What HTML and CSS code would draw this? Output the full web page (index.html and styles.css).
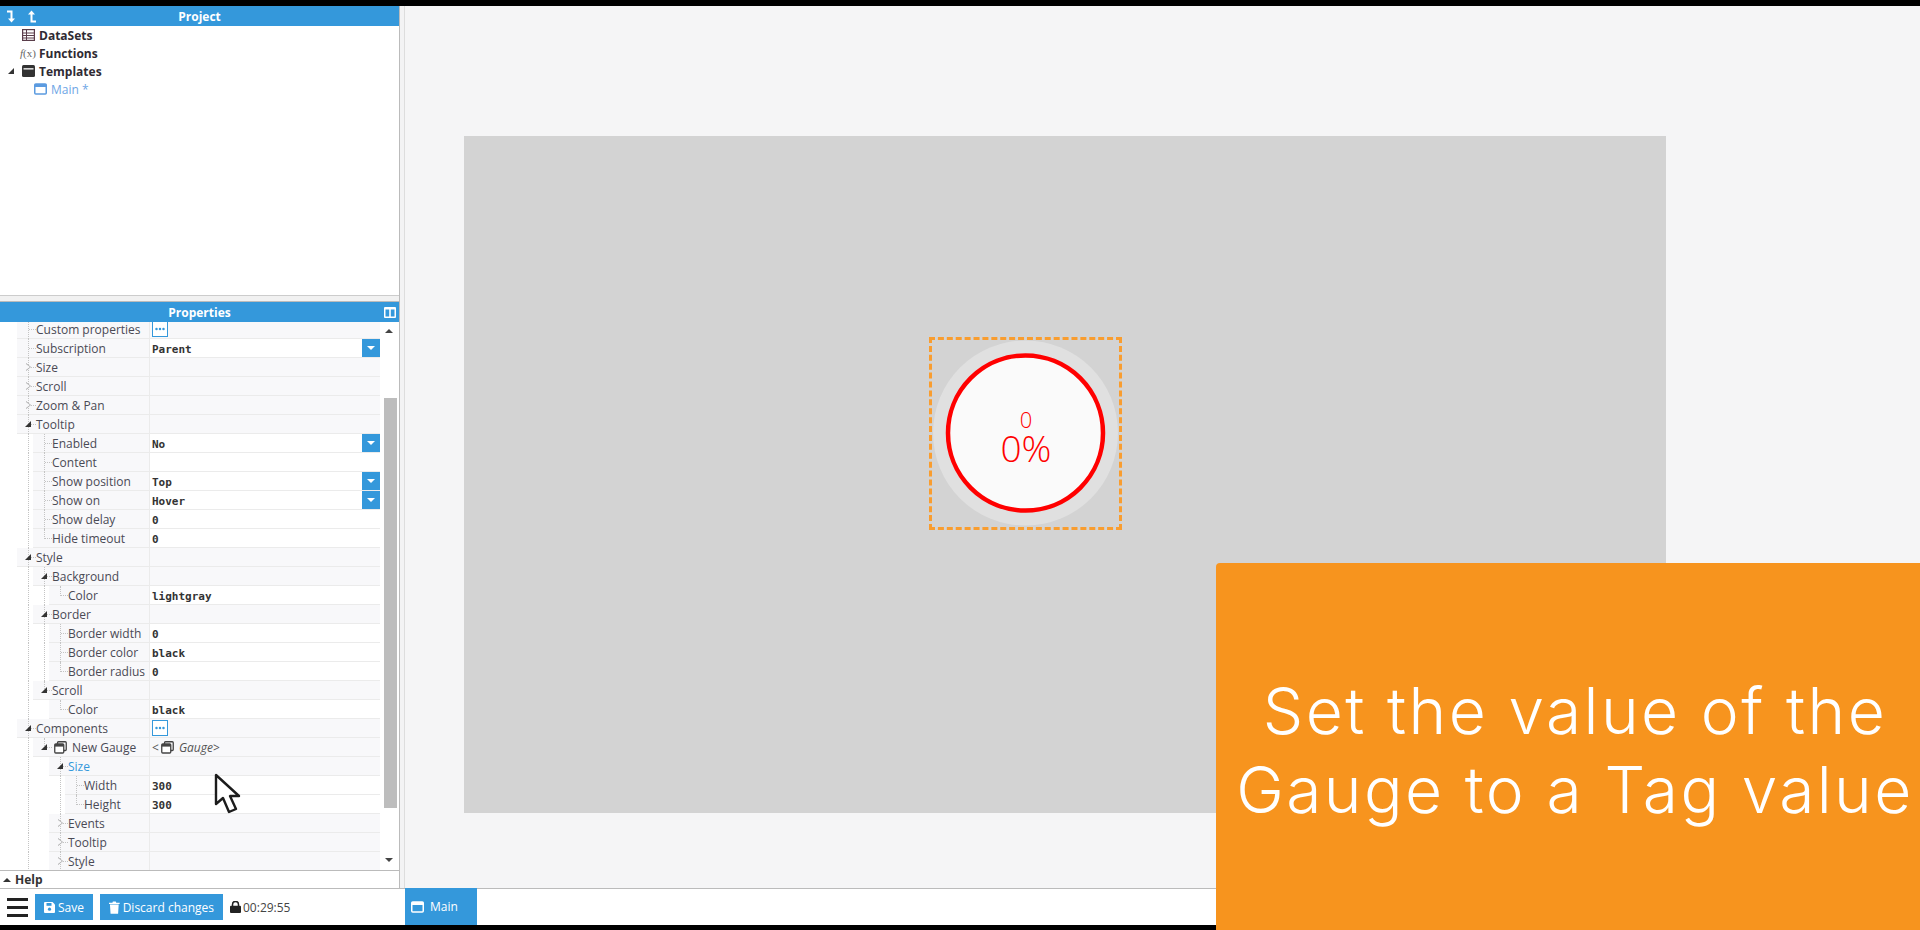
FILE: index.html
```html
<!DOCTYPE html>
<html lang="en">
<head>
<meta charset="UTF-8">
<title>Project editor</title>
<link rel="stylesheet" href="styles.css">
</head>
<body>
<svg class="defs" width="0" height="0">
  <symbol id="i-window" viewBox="0 0 13 12"><rect x="0.75" y="1" width="11.5" height="10" rx="1" fill="none" stroke="currentColor" stroke-width="1.5"/><rect x="0.75" y="1" width="11.5" height="3" fill="currentColor"/></symbol>
  <symbol id="i-gauge" viewBox="0 0 13 13"><rect x="3.5" y="0.75" width="8.75" height="8.75" rx="1" fill="none" stroke="#444" stroke-width="1.3"/><rect x="0.75" y="3" width="9" height="9" rx="1" fill="#fff" stroke="#444" stroke-width="1.3"/><rect x="0.75" y="3" width="9" height="2.6" fill="#444"/></symbol>
  <symbol id="i-dots" viewBox="0 0 16 16"><circle cx="4" cy="8" r="1.4"/><circle cx="8" cy="8" r="1.4"/><circle cx="12" cy="8" r="1.4"/></symbol>
</svg>

<div class="app">
  <div class="left">
    <div class="panel-head">
      <div class="head-icons">
        <svg width="10" height="13" viewBox="0 0 10 13"><path d="M1 1.5h4.5v8" fill="none" stroke="#fff" stroke-width="2"/><path d="M2 8.5h7L5.5 12.5z" fill="#fff"/></svg>
        <svg width="10" height="13" viewBox="0 0 10 13"><path d="M9 11.5H4.5v-8" fill="none" stroke="#fff" stroke-width="2"/><path d="M1 4.5h7L4.5 .5z" fill="#fff"/></svg>
      </div>
      <div class="head-title">Project</div>
      <div></div>
    </div>
    <div class="tree">
      <div class="tree-row">
        <span class="tree-slot"><svg width="13" height="12" viewBox="0 0 13 12"><rect x="0.6" y="0.6" width="11.8" height="10.8" fill="none" stroke="#5a3d4a" stroke-width="1.2"/><path d="M0 4h13M0 6.5h13M0 9h13M4.5 1v10" stroke="#5a3d4a" stroke-width="1"/></svg></span>
        <span class="tree-label">DataSets</span>
      </div>
      <div class="tree-row">
        <span class="tree-slot fx"><em>f</em>(x)</span>
        <span class="tree-label">Functions</span>
      </div>
      <div class="tree-row">
        <i class="twist open tree-twist"></i>
        <span class="tree-slot"><svg width="13" height="12" viewBox="0 0 13 12"><rect x="0" y="0" width="13" height="12" rx="1.5" fill="#333"/><rect x="1.5" y="3.2" width="10" height="1.3" fill="#fff"/></svg></span>
        <span class="tree-label">Templates</span>
      </div>
      <div class="tree-row sub">
        <span class="tree-slot blue"><svg width="13" height="12"><use href="#i-window"/></svg></span>
        <span class="tree-label plain">Main *</span>
      </div>
    </div>
    <div class="splitter"></div>
    <div class="panel-head">
      <div></div>
      <div class="head-title">Properties</div>
      <div class="head-right"><svg width="12" height="11" viewBox="0 0 12 11"><rect width="12" height="11" rx="1" fill="#fff"/><rect x="1.5" y="2.5" width="3.7" height="7" fill="#3498db"/><rect x="6.8" y="2.5" width="3.7" height="7" fill="#3498db"/></svg></div>
    </div>

    <div class="props">
      <div class="rows">
        <div class="row first"><div class="name"><span class="node"></span>Custom properties</div><div class="value"><span class="dots"><svg width="14" height="14"><use href="#i-dots"/></svg></span></div></div>
        <div class="row"><div class="name"><span class="node"></span>Subscription</div><div class="value on">Parent<span class="drop"></span></div></div>
        <div class="row"><div class="name"><span class="node"><i class="twist"></i></span>Size</div><div class="value"></div></div>
        <div class="row"><div class="name"><span class="node"><i class="twist"></i></span>Scroll</div><div class="value"></div></div>
        <div class="row"><div class="name"><span class="node"><i class="twist"></i></span>Zoom &amp; Pan</div><div class="value"></div></div>
        <div class="row"><div class="name"><span class="node"><i class="twist open"></i></span>Tooltip</div><div class="value"></div></div>

        <div class="row"><i class="ind end"></i><div class="name"><span class="node"></span>Enabled</div><div class="value on">No<span class="drop"></span></div></div>
        <div class="row"><i class="ind end"></i><div class="name"><span class="node"></span>Content</div><div class="value on"></div></div>
        <div class="row"><i class="ind end"></i><div class="name"><span class="node"></span>Show position</div><div class="value on">Top<span class="drop"></span></div></div>
        <div class="row"><i class="ind end"></i><div class="name"><span class="node"></span>Show on</div><div class="value on">Hover<span class="drop"></span></div></div>
        <div class="row"><i class="ind end"></i><div class="name"><span class="node"></span>Show delay</div><div class="value on">0</div></div>
        <div class="row"><i class="ind end"></i><div class="name"><span class="node tail"></span>Hide timeout</div><div class="value on">0</div></div>

        <div class="row"><div class="name"><span class="node"><i class="twist open"></i></span>Style</div><div class="value"></div></div>
        <div class="row"><i class="ind end"></i><div class="name"><span class="node"><i class="twist open"></i></span>Background</div><div class="value"></div></div>
        <div class="row"><i class="ind"></i><i class="ind end"></i><div class="name"><span class="node tail"></span>Color</div><div class="value on">lightgray</div></div>
        <div class="row"><i class="ind end"></i><div class="name"><span class="node"><i class="twist open"></i></span>Border</div><div class="value"></div></div>
        <div class="row"><i class="ind"></i><i class="ind end"></i><div class="name"><span class="node"></span>Border width</div><div class="value on">0</div></div>
        <div class="row"><i class="ind"></i><i class="ind end"></i><div class="name"><span class="node"></span>Border color</div><div class="value on">black</div></div>
        <div class="row"><i class="ind"></i><i class="ind end"></i><div class="name"><span class="node tail"></span>Border radius</div><div class="value on">0</div></div>
        <div class="row"><i class="ind end"></i><div class="name"><span class="node tail"><i class="twist open"></i></span>Scroll</div><div class="value"></div></div>
        <div class="row"><i class="ind"></i><i class="ind end blank"></i><div class="name"><span class="node tail"></span>Color</div><div class="value on">black</div></div>

        <div class="row"><div class="name"><span class="node"><i class="twist open"></i></span>Components</div><div class="value"><span class="dots"><svg width="14" height="14"><use href="#i-dots"/></svg></span></div></div>
        <div class="row"><i class="ind end"></i><div class="name"><span class="node tail"><i class="twist open"></i></span><svg class="gauge-icon" width="13" height="13"><use href="#i-gauge"/></svg>New Gauge</div><div class="value note">&lt;<svg class="gauge-icon" width="13" height="13"><use href="#i-gauge"/></svg><em>Gauge</em>&gt;</div></div>
        <div class="row"><i class="ind"></i><i class="ind end blank"></i><div class="name"><span class="node"><i class="twist open"></i></span><span class="blue">Size</span></div><div class="value"></div></div>
        <div class="row"><i class="ind"></i><i class="ind blank"></i><i class="ind end"></i><div class="name"><span class="node"></span>Width</div><div class="value on">300</div></div>
        <div class="row"><i class="ind"></i><i class="ind blank"></i><i class="ind end"></i><div class="name"><span class="node tail"></span>Height</div><div class="value on">300</div></div>
        <div class="row"><i class="ind"></i><i class="ind end blank"></i><div class="name"><span class="node"><i class="twist"></i></span>Events</div><div class="value"></div></div>
        <div class="row"><i class="ind"></i><i class="ind end blank"></i><div class="name"><span class="node"><i class="twist"></i></span>Tooltip</div><div class="value"></div></div>
        <div class="row"><i class="ind"></i><i class="ind end blank"></i><div class="name"><span class="node"><i class="twist"></i></span>Style</div><div class="value"></div></div>
      </div>
      <div class="scrollbar">
        <i class="arrow up"></i>
        <div class="thumb"></div>
        <i class="arrow down"></i>
      </div>
    </div>

    <div class="help"><i class="arrow up small"></i>Help</div>
    <div class="footer">
      <svg class="burger" width="21" height="19" viewBox="0 0 21 19"><path d="M0 1.5h21M0 9.5h21M0 17.5h21" stroke="#222" stroke-width="3"/></svg>
      <button class="btn save">
        <svg width="11" height="11" viewBox="0 0 11 11"><path d="M0 1a1 1 0 0 1 1-1h7.5L11 2.5V10a1 1 0 0 1-1 1H1a1 1 0 0 1-1-1z" fill="#fff"/><rect x="2.5" y="1" width="5" height="2.8" fill="#3498db"/><circle cx="5.5" cy="7.2" r="1.6" fill="#3498db"/></svg>
        Save
      </button>
      <button class="btn discard">
        <svg width="11" height="13" viewBox="0 0 11 13"><path d="M0 1.5h3.5L4 .3h3l.5 1.2H11v1.3H0zM1 3.5h9l-.6 9.5H1.6z" fill="#fff"/></svg>
        Discard changes
      </button>
      <span class="timer">
        <svg width="11" height="12" viewBox="0 0 11 12"><path d="M2.5 5V3.4a3 3 0 0 1 6 0V5" fill="none" stroke="#222" stroke-width="1.5"/><rect y="4.8" width="11" height="7.2" rx="1" fill="#222"/></svg>
        00:29:55
      </span>
    </div>
  </div>

  <div class="right">
    <div class="stage">
      <div class="canvas">
        <div class="gauge">
          <svg width="193" height="193" viewBox="0 0 193 193">
            <circle cx="96.5" cy="96" r="92.5" fill="#e0e0e0"/>
            <circle cx="96.5" cy="96" r="77.5" fill="#fafafa" stroke="#ff0000" stroke-width="4.5"/>
            <text class="gauge-small" x="97" y="91">0</text>
            <text class="gauge-big" x="97" y="125">0%</text>
          </svg>
        </div>
      </div>
    </div>
    <div class="tabs">
      <div class="tab"><svg width="13" height="12"><use href="#i-window"/></svg>Main</div>
    </div>
  </div>
</div>

<div class="callout">Set the value of the<br>Gauge to a Tag value</div>
<svg class="cursor" width="27" height="41" viewBox="0 0 27 41"><path d="M2 2v29l7-6 6 14 7-3-6-13h9z" fill="#fff" stroke="#1c1c1c" stroke-width="2.4" stroke-linejoin="round"/></svg>
</body>
</html>
```

FILE: styles.css
```css
* {
  box-sizing: border-box;
}
body {
  margin: 0;
  height: 930px;
  overflow: hidden;
  background: #000;
  font-family: "Open Sans", sans-serif;
  font-size: 12px;
  color: #444;
  position: relative;
}
.defs {
  position: absolute;
}
.app {
  display: flex;
  height: 930px;
  padding: 6px 0 5px;
}

/* left column */
.left {
  width: 400px;
  display: flex;
  flex-direction: column;
  background: #fff;
  border-right: 1px solid #bbb;
}
.panel-head {
  height: 20px;
  flex: none;
  display: grid;
  grid-template-columns: 1fr auto 1fr;
  align-items: center;
  background: #3498db;
  color: #fff;
  font-weight: 700;
}
.head-icons {
  display: flex;
  gap: 11px;
  padding-left: 6px;
}
.head-right {
  display: flex;
  justify-content: flex-end;
  padding-right: 3px;
}
.tree {
  height: 269px;
  flex: none;
}
.tree-row {
  height: 18px;
  display: flex;
  align-items: center;
  padding-left: 22px;
  position: relative;
}
.tree-row.sub {
  padding-left: 34px;
}
.tree-slot {
  width: 17px;
  display: flex;
  align-items: center;
}
.sub .tree-slot {
  color: #5b9be0;
}
.tree-label {
  font-weight: 700;
  color: #2f2a33;
}
.tree-label.plain {
  font-weight: 400;
  color: #6ea6e6;
}
.fx {
  margin-left: -2px;
  margin-right: 2px;
  font-family: "Liberation Serif", serif;
  font-size: 11px;
  color: #666;
}
.splitter {
  height: 7px;
  flex: none;
  background: #f1f1f1;
  border-top: 1px solid #ccc;
  border-bottom: 1px solid #bbb;
}

/* property grid */
.props {
  height: 548px;
  flex: none;
  display: flex;
  overflow: hidden;
}
.rows {
  width: 380px;
  flex: none;
}
.row {
  height: 19px;
  display: flex;
  padding-left: 28px;
}
.row.first {
  margin-top: -2px;
}
.row:not(:has(.ind)) {
  padding-left: 17px;
}
.ind {
  width: 16px;
  flex: none;
  border-left: 1px dotted #c4c4c4;
}
.ind.end {
  width: 5px;
}
.ind.blank {
  border-left-color: transparent;
}
.name {
  flex: 1;
  min-width: 0;
  display: flex;
  align-items: center;
  padding-left: 11px;
  background: #f8f8fa;
  border-bottom: 1px solid #ebebeb;
  white-space: nowrap;
  color: #4a4a55;
}
.node {
  width: 8px;
  height: 19px;
  flex: none;
  position: relative;
  border-left: 1px dotted #c4c4c4;
  background: linear-gradient(to right, #c4c4c4 50%, transparent 50%) 0 9px / 2px 1px repeat-x;
}
.node.tail {
  height: 10px;
  align-self: flex-start;
}
.value {
  width: 231px;
  flex: none;
  height: 19px;
  display: flex;
  align-items: center;
  padding: 3px 0 0 2px;
  position: relative;
  background: #f8f8fa;
  border-left: 1px solid #ebebeb;
  border-bottom: 1px solid #ebebeb;
  font-family: "DejaVu Sans Mono", monospace;
  font-size: 11px;
  font-weight: 700;
  color: #333;
}
.value.on {
  background: #fff;
}
.value.note {
  padding-top: 0;
  font-family: "Open Sans", sans-serif;
  font-size: 12px;
  font-weight: 400;
  color: #555;
}
.gauge-icon {
  flex: none;
  margin: 0 5px 0 2px;
}
.dots {
  width: 16px;
  height: 16px;
  margin-top: -3px;
  display: flex;
  align-items: center;
  justify-content: center;
  background: #fff;
  border: 1px solid #3498db;
  fill: #3498db;
}
.drop {
  position: absolute;
  right: 0;
  top: 0;
  width: 18px;
  height: 18px;
  background: #3498db;
}
.drop::after {
  content: "";
  position: absolute;
  left: 5px;
  top: 7px;
  border-left: 4px solid transparent;
  border-right: 4px solid transparent;
  border-top: 4px solid #fff;
}
.twist {
  position: absolute;
  left: -3px;
  top: 5px;
  width: 0;
  height: 0;
  border-top: 4px solid transparent;
  border-bottom: 4px solid transparent;
  border-left: 5px solid #a8a8a8;
}
.twist::after {
  content: "";
  position: absolute;
  left: -5px;
  top: -3px;
  border-top: 3px solid transparent;
  border-bottom: 3px solid transparent;
  border-left: 4px solid #f8f8fa;
}
.twist.open {
  left: -4px;
  top: 6px;
  border-top: 0;
  border-left: 6px solid transparent;
  border-bottom: 6px solid #333;
}
.twist.open::after {
  display: none;
}
.twist.tree-twist {
  left: 8px;
  top: 6px;
}
.blue {
  color: #3498db;
}

.scrollbar {
  width: 18px;
  flex: none;
  display: flex;
  flex-direction: column;
  align-items: center;
  background: #fff;
}
.arrow {
  display: block;
  width: 0;
  height: 0;
  flex: none;
  border-left: 4px solid transparent;
  border-right: 4px solid transparent;
}
.arrow.up {
  border-bottom: 4px solid #444;
  margin-top: 7px;
}
.arrow.down {
  border-top: 4px solid #444;
  margin-top: 50px;
}
.thumb {
  width: 13px;
  height: 410px;
  flex: none;
  margin-top: 65px;
  margin-left: 3px;
  background: #bdbdbd;
}
.help {
  height: 18px;
  flex: none;
  display: flex;
  align-items: center;
  gap: 4px;
  padding-left: 3px;
  border-top: 1px solid #bbb;
  font-weight: 700;
  color: #333;
}
.arrow.small {
  margin-top: 0;
  border-bottom-color: #333;
}
.footer {
  height: 37px;
  flex: none;
  display: flex;
  align-items: center;
  padding: 0 0 0 7px;
  border-top: 1px solid #bbb;
  margin-right: -1px;
  background: #fff;
}
.burger {
  margin-right: 7px;
}
.btn {
  height: 26px;
  display: flex;
  align-items: center;
  gap: 3px;
  padding: 0 9px;
  border: none;
  background: #3498db;
  color: #fff;
  font-family: "Open Sans", sans-serif;
  font-size: 12px;
  white-space: nowrap;
}
.btn.save {
  width: 58px;
  margin-right: 7px;
}
.btn.discard {
  width: 123px;
  margin-right: 7px;
}
.timer {
  display: flex;
  align-items: center;
  gap: 2px;
  color: #444;
}

/* right side */
.right {
  flex: 1;
  display: flex;
  flex-direction: column;
  padding-left: 5px;
  background: #f3f3f4;
}
.stage {
  flex: 1;
  background: #f5f5f6;
  border-left: 1px solid #ddd;
  margin-left: -1px;
  padding: 130px 0 0 59px;
}
.canvas {
  width: 1202px;
  height: 677px;
  background: #d3d3d3;
  position: relative;
}
.gauge {
  position: absolute;
  left: 465px;
  top: 201px;
  width: 193px;
  height: 193px;
  outline: 3px dashed #f99d2f;
  outline-offset: -3px;
}
.gauge svg {
  display: block;
}
.gauge text {
  font-family: "Open Sans", sans-serif;
  font-weight: 350;
  text-anchor: middle;
  fill: #f00;
}
.gauge-small {
  font-size: 22px;
}
.gauge-big {
  font-size: 37px;
}
.tabs {
  height: 37px;
  flex: none;
  margin-left: -5px;
  background: #fff;
  border-top: 1px solid #bbb;
  padding-left: 5px;
}
.tab {
  width: 72px;
  height: 37px;
  margin-top: -1px;
  display: flex;
  align-items: center;
  gap: 6px;
  padding-left: 6px;
  background: #3498db;
  color: #fff;
}

/* overlays */
.callout {
  position: absolute;
  left: 1216px;
  top: 563px;
  right: 0;
  bottom: 0;
  display: flex;
  align-items: center;
  justify-content: center;
  text-align: center;
  padding: 6px 0 0 14px;
  background: #f7941e;
  border-top-left-radius: 4px;
  color: #fff;
  font-family: Inter, sans-serif;
  font-weight: 300;
  font-size: 64px;
  letter-spacing: 2.4px;
  line-height: 79px;
  white-space: nowrap;
}
.cursor {
  position: absolute;
  left: 214px;
  top: 773px;
}
```
